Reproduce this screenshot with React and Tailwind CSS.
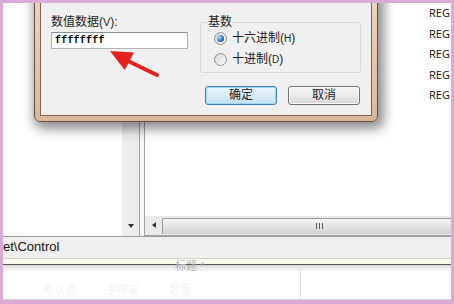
import React from 'react';

const cjk = { fontFamily: '"Liberation Sans", "Noto Sans CJK SC", sans-serif' };

const Radio = ({ checked }) => (
  <div className="w-[13px] h-[13px] rounded-full border border-[#8d8d8d] bg-gradient-to-br from-[#d8d8d8] to-[#fbfbfb] flex items-center justify-center shrink-0">
    {checked && (
      <div className="w-[7px] h-[7px] rounded-full bg-[radial-gradient(circle_at_35%_35%,#b5e0ff,#2c74c0_55%,#0c3a6e)]" />
    )}
  </div>
);

const RegList = () => (
  <div className="flex-1 pl-[284px] overflow-hidden whitespace-nowrap text-[11px] text-[#111]" style={{ fontFamily: '"Open Sans", "Liberation Sans", sans-serif' }}>
    {[0, 1, 2, 3, 4].map((i) => (
      <div key={i} className="h-[20.5px] leading-[20.5px]">REG</div>
    ))}
  </div>
);

const EditDialog = () => (
  <div className="absolute left-[31px] top-[-20px] w-[344px] h-[139px] rounded-b-[6px] border border-[#5e4e44] bg-gradient-to-b from-[#efd7c3] to-[#dcb899] p-[5px] shadow-[3px_4px_12px_3px_rgba(0,0,0,0.45)]">
    <div className="h-full border border-[#7d6251] bg-[#f0f0f0] pt-[25px] pl-[10px] pr-[10px] text-[12px] text-[#1b1b1b]" style={cjk}>
      <div className="flex justify-between">
        <div className="flex flex-col">
          <div className="h-[14px] leading-[14px]">数值数据(<span className="text-[11px]">V</span>):</div>
          <div className="mt-[3px] w-[137px] h-[17px] border border-[#aeb2b8] border-t-[#8a8f96] bg-white pl-[3px] leading-[15px] text-[10px] text-black font-bold tracking-[0.2px]" style={{ fontFamily: '"Liberation Mono", monospace' }}>
            ffffffff
          </div>
        </div>
        <fieldset className="w-[161px] h-[58px] border border-[#d3d9de] rounded-[3px] pl-[13px]">
          <legend className="ml-[-7px] px-[1px] h-[14px] leading-[14px]">基数</legend>
          <div className="mt-[1px] flex items-center gap-[5px] h-[16px]">
            <Radio checked />
            <span>十六进制(<span className="text-[10px]">H</span>)</span>
          </div>
          <div className="mt-[5px] flex items-center gap-[5px] h-[16px]">
            <Radio />
            <span>十进制(<span className="text-[10px]">D</span>)</span>
          </div>
        </fieldset>
      </div>
      <div className="mt-[13px] mr-[1px] flex justify-end gap-[11px]">
        <button className="w-[72px] h-[19px] rounded-[3px] border border-[#3c7fb1] bg-gradient-to-b from-[#ecf7fd] to-[#c3e1f3] shadow-[inset_0_0_0_1px_#9ed6f6] leading-[17px] text-[12px]" style={cjk}>
          确定
        </button>
        <button className="w-[72px] h-[19px] rounded-[3px] border border-[#707070] bg-gradient-to-b from-[#f4f4f4] via-[#ebebeb] to-[#d6d6d6] shadow-[inset_0_0_0_1px_#fcfcfc] leading-[17px] text-[12px]" style={cjk}>
          取消
        </button>
      </div>
    </div>
  </div>
);

const Arrow = () => (
  <svg className="absolute left-[-3px] top-[-3px] pointer-events-none" width="454" height="304" viewBox="0 0 454 304">
    <line x1="157" y1="75" x2="126" y2="60" stroke="#e5211d" strokeWidth="4" strokeLinecap="round" />
    <polygon points="110,51 134,52.5 124.7,70" fill="#e5211d" />
  </svg>
);

export default function App() {
  return (
    <div className="w-[454px] h-[304px] bg-[#dbaad7] pt-[3px] pl-[3px] pr-[3px] pb-[4px]">
      <div className="relative h-full bg-white flex flex-col overflow-hidden">
        <div className="h-[233px] flex">
          <div className="w-[119px] bg-white" />
          <div className="w-[17px] bg-[#ececec] flex flex-col justify-end">
            <div className="h-[19px] flex items-center justify-center">
              <div className="w-0 h-0 border-l-[3.5px] border-r-[3.5px] border-t-[4px] border-l-transparent border-r-transparent border-t-[#333]" />
            </div>
          </div>
          <div className="w-[6px] border-l border-r border-[#a0a0a0] bg-[#f7f7f7]" />
          <div className="flex-1 flex flex-col min-w-0">
            <RegList />
            <div className="h-[20px] flex bg-[#e9e9e9] border-b border-[#a5a5a5]">
              <div className="w-[17px] flex items-center justify-center">
                <div className="w-0 h-0 border-t-[3.5px] border-b-[3.5px] border-r-[4px] border-t-transparent border-b-transparent border-r-[#333]" />
              </div>
              <div className="flex-1 mt-[2px] mb-[1px] border-t border-l border-[#979797] rounded-tl-[2px] bg-gradient-to-b from-[#f5f5f5] via-[#e4e4e4] to-[#cfcfcf] pl-[153px] flex items-center">
                <div className="flex gap-[2px]">
                  <div className="w-[1px] h-[6px] bg-[#555]" />
                  <div className="w-[1px] h-[6px] bg-[#555]" />
                  <div className="w-[1px] h-[6px] bg-[#555]" />
                </div>
              </div>
            </div>
          </div>
        </div>
        <div className="h-[22px] border-t border-[#9a9a9a] bg-[#f1eeee] flex items-center text-[13px] text-[#111]" style={{ fontFamily: '"Liberation Sans", sans-serif' }}>
          et\Control
        </div>
        <div className="h-[8px] border-t border-[#d4d4c4] border-b border-b-[#555] bg-[#fbfbef]" />
        <div className="flex-1 flex border-b border-[#d3d3d3] bg-gradient-to-b from-[#d9d9d9] via-[#ffffff] via-[20%] to-[#ffffff]">
          <div className="w-[298px] border-r border-[#e4e4e4] flex flex-col" style={cjk}>
            <div className="pl-[172px] -mt-[5px] h-[12px] text-[11px] text-[#b4b4b4] leading-[12px]">标题 ^</div>
            <div className="mt-[10px] flex gap-[30px] pl-[40px] text-[11px] text-[#f3f3f7]">
              <span>默认值</span><span>字符串</span><span>数据</span>
            </div>
          </div>
          <div className="flex-1" />
        </div>
        <EditDialog />
        <Arrow />
      </div>
    </div>
  );
}
